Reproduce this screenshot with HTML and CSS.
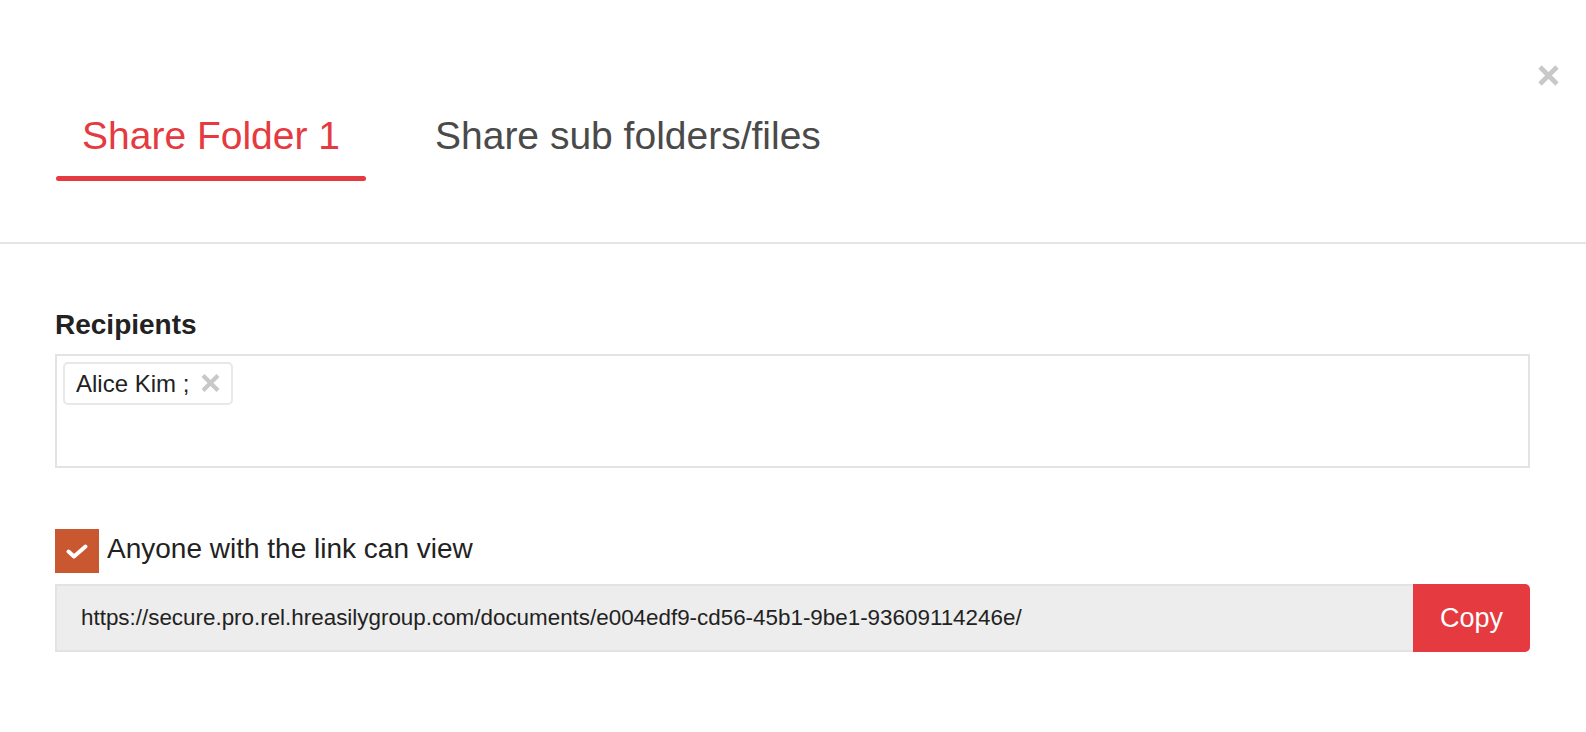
FILE: index.html
```html
<!DOCTYPE html>
<html lang="en">
<head>
<meta charset="utf-8">
<title>Share Folder</title>
<link rel="stylesheet" href="styles.css">
</head>
<body>
<div class="modal">
  <div class="modal-header">
    <nav class="tabs">
      <div class="tab tab-active">Share Folder 1</div>
      <div class="tab">Share sub folders/files</div>
    </nav>
    <button class="close" aria-label="Close">
      <svg width="23" height="23" viewBox="0 0 23 23"><path d="M3 3 L20 20 M20 3 L3 20" stroke="#c8c8c8" stroke-width="4.6" fill="none"/></svg>
    </button>
  </div>
  <div class="modal-body">
    <div class="field-label">Recipients</div>
    <div class="recipients">
      <span class="tag">Alice Kim ;
        <svg class="tag-x" width="21" height="20" viewBox="0 0 21 20"><path d="M3 2.5 L18 17.5 M18 2.5 L3 17.5" stroke="#c8c8c8" stroke-width="4.2" fill="none"/></svg>
      </span>
    </div>
    <div class="check-row">
      <span class="checkbox">
        <svg width="24" height="17" viewBox="0 0 24 17"><path d="M3.5 8.5 L9 13.5 L20.5 3.5" stroke="#ffffff" stroke-width="4" fill="none" stroke-linecap="round" stroke-linejoin="round"/></svg>
      </span>
      <span class="check-label">Anyone with the link can view</span>
    </div>
    <div class="link-row">
      <div class="link-box">https://secure.pro.rel.hreasilygroup.com/documents/e004edf9-cd56-45b1-9be1-93609114246e/</div>
      <button class="copy-btn">Copy</button>
    </div>
  </div>
</div>
</body>
</html>
```

FILE: styles.css
```css
html, body {
  margin: 0;
  padding: 0;
  background: #ffffff;
}

body {
  font-family: "Liberation Sans", Arial, Helvetica, sans-serif;
  color: #222222;
}

.modal {
  width: 1586px;
  height: 732px;
  background: #ffffff;
}

.modal-header {
  position: relative;
  height: 242px;
  border-bottom: 2px solid #e5e5e5;
  box-sizing: content-box;
}

.tabs {
  display: flex;
  gap: 43px;
  padding: 117px 0 0 56px;
}

.tab {
  font-size: 39px;
  line-height: 38px;
  color: #4a4a4a;
  padding: 0 26px 26px;
  white-space: nowrap;
}

.tab-active {
  color: #e53a40;
  position: relative;
}

.tab-active::after {
  content: "";
  position: absolute;
  left: 0;
  right: 0;
  bottom: 0;
  height: 5px;
  border-radius: 3px;
  background: #e53a40;
}

.close {
  position: absolute;
  top: 64px;
  right: 26px;
  width: 23px;
  height: 23px;
  padding: 0;
  border: 0;
  background: none;
  display: flex;
}

.modal-body {
  padding: 0 56px 0 55px;
}

.field-label {
  margin-top: 67px;
  font-size: 28px;
  line-height: 28px;
  font-weight: bold;
  color: #222222;
}

.recipients {
  margin-top: 15px;
  height: 114px;
  box-sizing: border-box;
  border: 2px solid #e3e3e3;
  padding: 6px 6px;
}

.tag {
  display: inline-flex;
  align-items: center;
  gap: 11px;
  height: 43px;
  box-sizing: border-box;
  border: 2px solid #e8e8e8;
  border-radius: 5px;
  padding: 0 10px 0 11px;
  font-size: 24px;
  color: #222222;
  white-space: nowrap;
}

.tag-x {
  display: block;
  margin-top: -1px;
}

.check-row {
  display: flex;
  align-items: flex-start;
  gap: 8px;
  margin-top: 61px;
}

.checkbox {
  width: 44px;
  height: 44px;
  background: #c9572f;
  display: flex;
  align-items: center;
  justify-content: center;
}

.check-label {
  margin-top: 6px;
  font-size: 28px;
  line-height: 28px;
  color: #222222;
}

.link-row {
  display: flex;
  margin-top: 11px;
  height: 68px;
}

.link-box {
  flex: 1;
  display: flex;
  align-items: center;
  box-sizing: border-box;
  background: #ededed;
  border: 2px solid #e3e3e3;
  border-right: 0;
  padding-left: 24px;
  font-size: 22.4px;
  color: #222222;
  white-space: nowrap;
  overflow: hidden;
}

.copy-btn {
  width: 117px;
  border: 0;
  margin: 0;
  background: #e53a40;
  color: #ffffff;
  font-family: "Liberation Sans", Arial, Helvetica, sans-serif;
  font-size: 27px;
  border-radius: 0 5px 5px 0;
  padding: 0;
}
```
